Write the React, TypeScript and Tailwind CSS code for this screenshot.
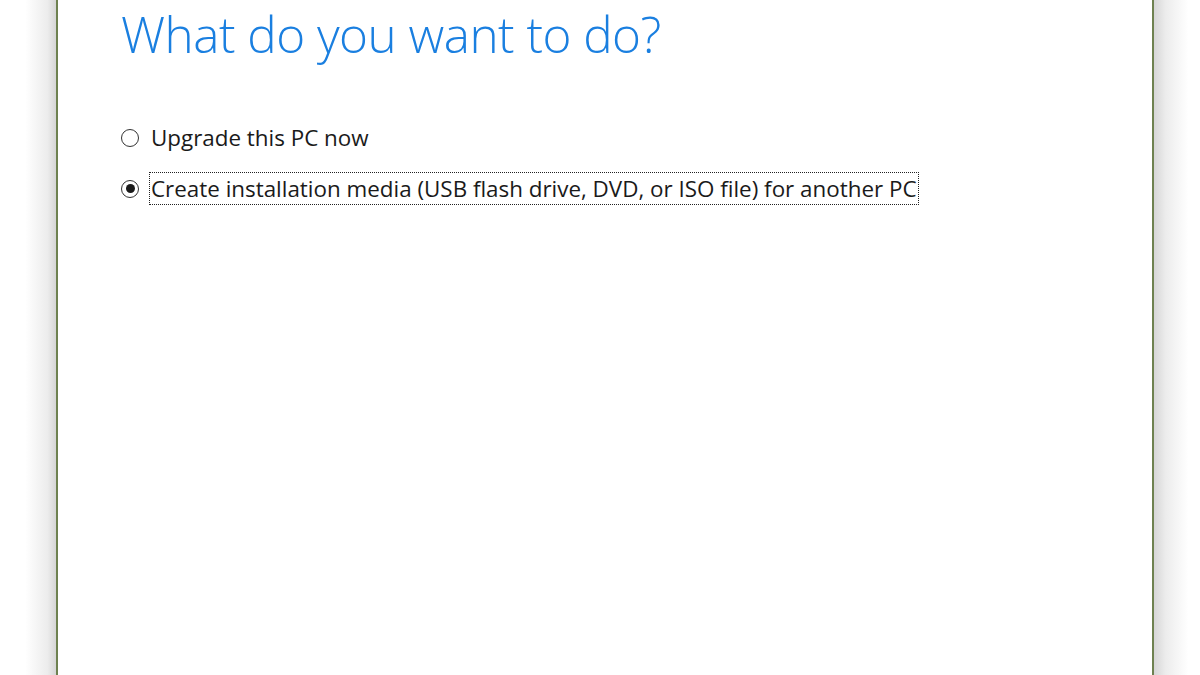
export default function App() {
  return (
    <div className="w-[1200px] h-[675px] flex bg-white overflow-hidden" style={{ fontFamily: '"Open Sans", "Noto Sans", sans-serif' }}>
      <div className="w-[56px] h-full bg-[linear-gradient(to_right,#ffffff_45%,#ececec_85%,#d6d6d6)]" />
      <div className="flex-1 h-full border-x-2 border-[#6e8150] bg-white pl-[63px]">
        <h1 className="text-[#1a7fe0] font-light text-[49.4px] leading-[68px] tracking-[-0.5px]">What do you want to do?</h1>
        <div className="mt-[53px] flex flex-col gap-[18px] text-[22.4px] text-[#1a1a1a]">
          <label className="flex items-center h-[33px]">
            <span className="w-[18px] h-[18px] rounded-full border-[1.5px] border-[#333] bg-white mr-[11px] flex items-center justify-center" />
            <span className="px-[1px]">Upgrade this PC now</span>
          </label>
          <label className="flex items-center h-[33px]">
            <span className="w-[18px] h-[18px] rounded-full border-[1.5px] border-[#333] bg-white mr-[10px] flex items-center justify-center">
              <span className="w-[9px] h-[9px] rounded-full bg-[#1a1a1a]" />
            </span>
            <span className="px-[1px] h-[33px] flex items-center border border-dotted border-[#222]">Create installation media (USB flash drive, DVD, or ISO file) for another PC</span>
          </label>
        </div>
      </div>
      <div className="w-[46px] h-full bg-[linear-gradient(to_left,#ffffff_25%,#ececec_75%,#d6d6d6)]" />
    </div>
  );
}
